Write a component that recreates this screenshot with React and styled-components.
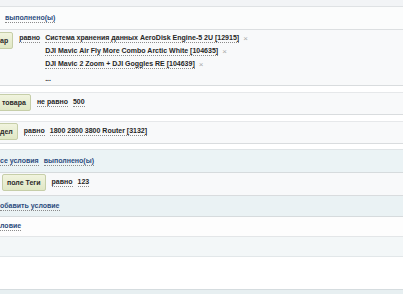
import React from "react";
import styled, { createGlobalStyle } from "styled-components";

const Global = createGlobalStyle`
  html, body { margin: 0; padding: 0; background: #fff; }
  body {
    font-family: "Liberation Sans", Arial, sans-serif;
    font-size: 7px;
    font-weight: 700;
    color: #2b2b2b;
  }
`;

// The panel is a crop of a wider condition tree: rows run past both edges
const Tree = styled.div`
  width: 403px;
  height: 294px;
  overflow: hidden;
  background: #fff;
`;

const Band = styled.div`
  height: ${(p) => p.$h}px;
  background: ${(p) => p.$bg};
  border-top: ${(p) => (p.$top ? `1px solid ${p.$top}` : "none")};
  border-bottom: 1px solid ${(p) => p.$line || "#dcdfe1"};
  margin-top: ${(p) => p.$mt || 0}px;
  display: flex;
  align-items: center;
  overflow: hidden;
  white-space: nowrap;
`;

const CondRow = styled.div`
  background: #f8f9fa;
  border-top: ${(p) => (p.$noTop ? "none" : "1px solid #e6e8ea")};
  border-bottom: 1px solid #d9dcde;
  margin-top: ${(p) => p.$mt || 0}px;
  padding: ${(p) => p.$pad || "1px 0 3px"};
  display: flex;
  align-items: flex-start;
  overflow: hidden;
  white-space: nowrap;
`;

const Shift = styled.div`
  margin-left: ${(p) => p.$x}px;
  display: flex;
  align-items: ${(p) => p.$align || "center"};
  gap: 5px;
`;

const Field = styled.span`
  display: inline-flex;
  align-items: center;
  box-sizing: border-box;
  height: 17px;
  padding: 0 4px;
  margin-right: 1px;
  border: 1px solid #c6cea8;
  border-radius: 2px;
  background: linear-gradient(#f1f4de, #e0e7c5);
  color: #2a2a2a;
`;

const Dotted = styled.span`
  display: inline-block;
  line-height: 8px;
  border-bottom: 1px dotted #8a8a8a;
  color: ${(p) => (p.$link ? "#2b4c7e" : "#262626")};
`;

const Cell = styled.div`
  height: 13px;
  display: flex;
  align-items: center;
`;

const Values = styled.div`
  display: flex;
  flex-direction: column;
`;

const ValueLine = styled.div`
  height: 13px;
  display: flex;
  align-items: center;
  gap: 4px;
`;

const Close = styled.span`
  color: #a9a9a9;
  font-size: 8px;
  font-weight: 400;
  line-height: 8px;
`;

const Ellipsis = styled.span`
  color: #262626;
  line-height: 8px;
  padding-top: 3px;
`;

const values = [
  "Система хранения данных AeroDisk Engine-5 2U [12915]",
  "DJI Mavic Air Fly More Combo Arctic White [104635]",
  "DJI Mavic 2 Zoom + DJI Goggles RE [104639]",
];

export default function App() {
  return (
    <>
      <Global />
      <Tree>
        <Band $h={6} $bg="#f2f4f6" $line="#dfe2e4" />
        <Band $h={22} $bg="#fbfcfc" $line="#dcdfe1">
          <Shift $x={5}>
            <Dotted $link>выполнено(ы)</Dotted>
          </Shift>
        </Band>

        <CondRow $noTop $pad="2px 0 1px">
          <Shift $x={-5} $align="flex-start">
            <Field>ар</Field>
            <Cell>
              <Dotted>равно</Dotted>
            </Cell>
            <Values>
              {values.map((v) => (
                <ValueLine key={v}>
                  <Dotted>{v}</Dotted>
                  <Close>×</Close>
                </ValueLine>
              ))}
              <ValueLine>
                <Ellipsis>...</Ellipsis>
              </ValueLine>
            </Values>
          </Shift>
        </CondRow>

        <CondRow $mt={6}>
          <Shift $x={-3}>
            <Field>товара</Field>
            <Dotted>не равно</Dotted>
            <Dotted>500</Dotted>
          </Shift>
        </CondRow>

        <CondRow $mt={6}>
          <Shift $x={-5}>
            <Field>дел</Field>
            <Dotted>равно</Dotted>
            <Dotted>1800 2800 3800 Router [3132]</Dotted>
          </Shift>
        </CondRow>

        <Band $h={22} $mt={5} $bg="#ebf3f5" $top="#dfe4e6" $line="#d6dbdd">
          <Shift $x={0}>
            <Dotted $link>се условия</Dotted>
            <Dotted $link>выполнено(ы)</Dotted>
          </Shift>
        </Band>

        <CondRow $noTop $pad="1px 0 4px">
          <Shift $x={2}>
            <Field>поле Теги</Field>
            <Dotted>равно</Dotted>
            <Dotted>123</Dotted>
          </Shift>
        </CondRow>

        <Band $h={20} $bg="#eaf2f4" $line="#d6dbdd">
          <Shift $x={0}>
            <Dotted $link>обавить условие</Dotted>
          </Shift>
        </Band>
        <Band $h={19} $bg="#fdfdfd" $line="#e3e6e8">
          <Shift $x={0}>
            <Dotted $link>ловие</Dotted>
          </Shift>
        </Band>
        <Band $h={19} $bg="#f3f7f8" $line="#e2e7e9" />
        <Band $h={32} $bg="#ffffff" $line="#d5dcdf" />
        <Band $h={10} $bg="#e7eff1" $line="#e7eff1" />
      </Tree>
    </>
  );
}
